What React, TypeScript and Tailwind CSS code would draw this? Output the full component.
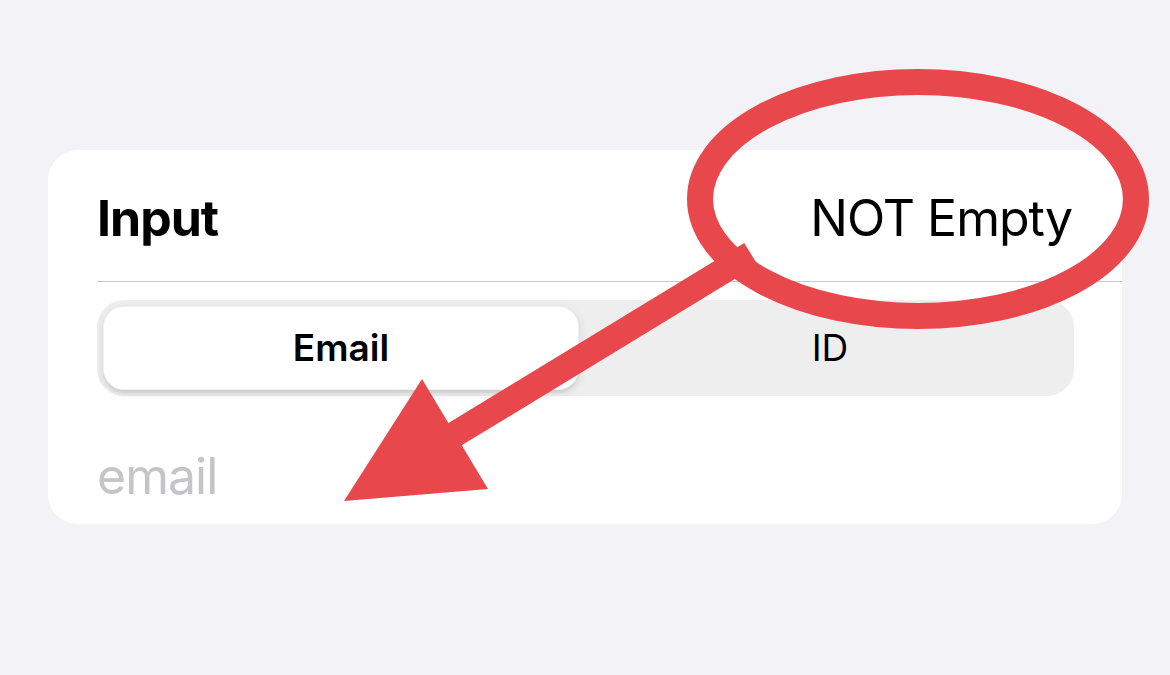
const Annotation = () => {
  return (
    <svg
      className="absolute inset-0 pointer-events-none"
      width="1170"
      height="675"
      viewBox="0 0 1170 675"
    >
      <ellipse cx="918" cy="199" rx="218" ry="117" fill="none" stroke="#e8474c" strokeWidth="26" />
      <line x1="751" y1="254" x2="452" y2="436" stroke="#e8474c" strokeWidth="26" />
      <polygon points="422,379 344,501 488,489" fill="#e8474c" />
    </svg>
  );
};

const App = () => {
  return (
    <div
      className="relative w-full min-h-screen bg-[#f2f2f7] pt-[150px] px-[48px]"
      style={{ fontFamily: "Inter, 'Liberation Sans', sans-serif" }}
    >
      <div className="bg-white rounded-[30px] pl-[49px]">
        <div className="flex items-center justify-between pr-[50px] pt-[38px] pb-[33px] leading-[60px] text-[50px] text-black tracking-[-0.02em]">
          <h1 className="font-bold">Input</h1>
          <span className="font-normal">NOT Empty</span>
        </div>
        <div className="h-px bg-[#c6c6c8]" />
        <div className="pr-[48px] pt-[18px]">
          <div className="flex justify-between items-center h-[96px] p-[6px] rounded-[27px] bg-[#eeeeef]">
            <div className="w-[476px] h-[84px] flex items-center justify-center rounded-[21px] bg-white border border-black/5 shadow-[0_3px_8px_rgba(0,0,0,0.12),0_3px_1px_rgba(0,0,0,0.04)] text-[37px] font-semibold text-black">
              Email
            </div>
            <div className="w-[476px] h-[84px] flex items-center justify-center text-[37px] font-normal text-black">
              ID
            </div>
          </div>
        </div>
        <div className="pt-[50px] pb-[18px] pr-[48px]">
          <div className="text-[50px] leading-[60px] text-[#c5c5c7] tracking-[-0.02em]">email</div>
        </div>
      </div>
      <Annotation />
    </div>
  );
};

export default App;
